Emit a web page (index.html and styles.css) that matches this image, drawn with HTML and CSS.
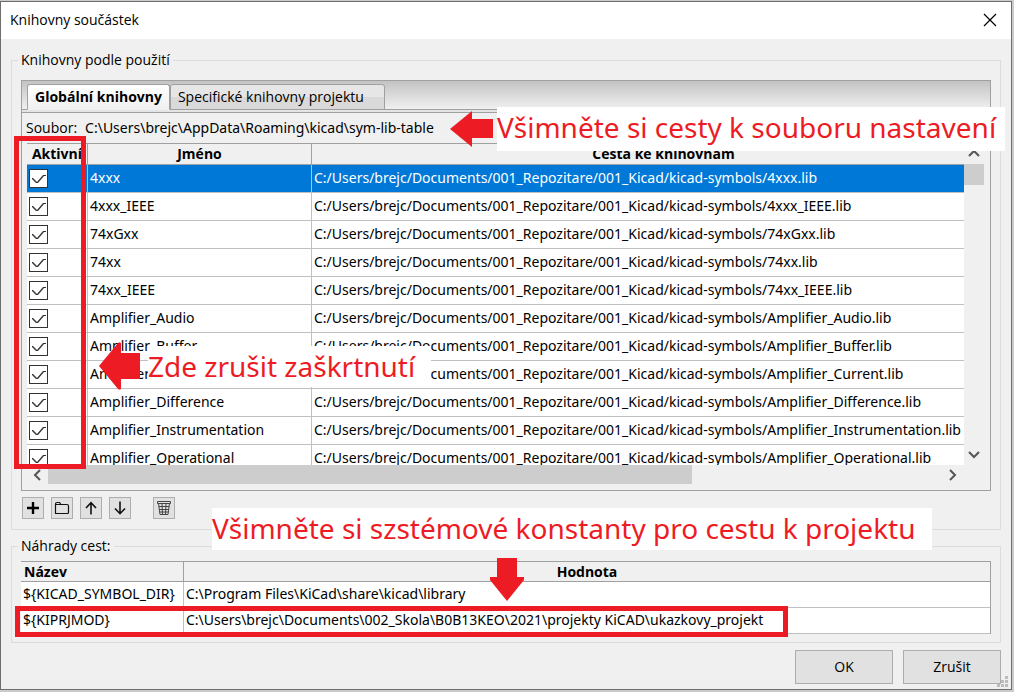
FILE: index.html
```html
<!DOCTYPE html>
<html lang="cs">
<head>
<meta charset="utf-8">
<title>Knihovny součástek</title>
<link rel="stylesheet" href="styles.css">
</head>
<body>
<main class="window">
  <header class="titlebar">
    <h1 class="title">Knihovny součástek</h1>
    <button class="close" aria-label="Zavřít"><svg width="14" height="14" viewBox="0 0 14 14"><path d="M1 1L13 13M13 1L1 13" fill="none" stroke="#000" stroke-width="1.2"/></svg></button>
  </header>

  <fieldset class="group">
    <legend>Knihovny podle použití</legend>
    <div class="notebook">
      <div class="tabs" role="tablist">
        <button class="tab tab-active" role="tab" aria-selected="true">Globální knihovny</button>
        <button class="tab" role="tab" aria-selected="false">Specifické knihovny projektu</button>
      </div>
      <div class="file"><span>Soubor:</span><span class="path">C:\Users\brejc\AppData\Roaming\kicad\sym-lib-table</span></div>
      <div class="grid">
        <div class="viewport">
          <table class="libs">
            <colgroup><col class="c-active"><col class="c-name"><col></colgroup>
            <thead><tr><th>Aktivní</th><th>Jméno</th><th>Cesta ke knihovnám</th></tr></thead>
            <tbody>
              <tr class="selected"><td><input type="checkbox" checked aria-label="4xxx"></td><td>4xxx</td><td>C:/Users/brejc/Documents/001_Repozitare/001_Kicad/kicad-symbols/4xxx.lib</td></tr>
              <tr><td><input type="checkbox" checked aria-label="4xxx_IEEE"></td><td>4xxx_IEEE</td><td>C:/Users/brejc/Documents/001_Repozitare/001_Kicad/kicad-symbols/4xxx_IEEE.lib</td></tr>
              <tr><td><input type="checkbox" checked aria-label="74xGxx"></td><td>74xGxx</td><td>C:/Users/brejc/Documents/001_Repozitare/001_Kicad/kicad-symbols/74xGxx.lib</td></tr>
              <tr><td><input type="checkbox" checked aria-label="74xx"></td><td>74xx</td><td>C:/Users/brejc/Documents/001_Repozitare/001_Kicad/kicad-symbols/74xx.lib</td></tr>
              <tr><td><input type="checkbox" checked aria-label="74xx_IEEE"></td><td>74xx_IEEE</td><td>C:/Users/brejc/Documents/001_Repozitare/001_Kicad/kicad-symbols/74xx_IEEE.lib</td></tr>
              <tr><td><input type="checkbox" checked aria-label="Amplifier_Audio"></td><td>Amplifier_Audio</td><td>C:/Users/brejc/Documents/001_Repozitare/001_Kicad/kicad-symbols/Amplifier_Audio.lib</td></tr>
              <tr><td><input type="checkbox" checked aria-label="Amplifier_Buffer"></td><td>Amplifier_Buffer</td><td>C:/Users/brejc/Documents/001_Repozitare/001_Kicad/kicad-symbols/Amplifier_Buffer.lib</td></tr>
              <tr><td><input type="checkbox" checked aria-label="Amplifier_Current"></td><td>Amplifier_Current</td><td>C:/Users/brejc/Documents/001_Repozitare/001_Kicad/kicad-symbols/Amplifier_Current.lib</td></tr>
              <tr><td><input type="checkbox" checked aria-label="Amplifier_Difference"></td><td>Amplifier_Difference</td><td>C:/Users/brejc/Documents/001_Repozitare/001_Kicad/kicad-symbols/Amplifier_Difference.lib</td></tr>
              <tr><td><input type="checkbox" checked aria-label="Amplifier_Instrumentation"></td><td>Amplifier_Instrumentation</td><td>C:/Users/brejc/Documents/001_Repozitare/001_Kicad/kicad-symbols/Amplifier_Instrumentation.lib</td></tr>
              <tr><td><input type="checkbox" checked aria-label="Amplifier_Operational"></td><td>Amplifier_Operational</td><td>C:/Users/brejc/Documents/001_Repozitare/001_Kicad/kicad-symbols/Amplifier_Operational.lib</td></tr>
            </tbody>
          </table>
        </div>
        <div class="vbar">
          <svg width="20" height="20" viewBox="0 0 20 20"><path d="M5 13L10 8L15 13" fill="none" stroke="#555" stroke-width="2"/></svg>
          <div class="vthumb"></div>
          <svg class="vdown" width="20" height="20" viewBox="0 0 20 20"><path d="M5 7L10 12L15 7" fill="none" stroke="#555" stroke-width="2"/></svg>
        </div>
        <div class="hbar">
          <svg width="21" height="20" viewBox="0 0 21 20"><path d="M13 5L8 10L13 15" fill="none" stroke="#555" stroke-width="2"/></svg>
          <div class="htrack"><div class="hthumb"></div></div>
          <svg width="21" height="20" viewBox="0 0 21 20"><path d="M7 5L12 10L7 15" fill="none" stroke="#555" stroke-width="2"/></svg>
        </div>
      </div>
    </div>
    <div class="tools">
      <button class="tool" aria-label="Přidat"><svg width="20" height="20" viewBox="0 0 20 20"><path d="M10 4V16M4 10H16" fill="none" stroke="#000" stroke-width="2.4"/></svg></button>
      <button class="tool" aria-label="Procházet"><svg width="20" height="20" viewBox="0 0 20 20"><path d="M3.500 15.500V6Q3.500 4.500 5 4.500H7.500L9 6.500H15Q16.500 6.500 16.500 8V14.500Q16.500 15.500 15.500 15.500ZM3.500 6.500H9" fill="none" stroke="#111" stroke-width="1.200"/></svg></button>
      <button class="tool" aria-label="Nahoru"><svg width="20" height="20" viewBox="0 0 20 20"><path d="M10 16.500V4.500M5 10L10 4.700L15 10" fill="none" stroke="#111" stroke-width="1.600"/></svg></button>
      <button class="tool" aria-label="Dolů"><svg width="20" height="20" viewBox="0 0 20 20"><path d="M10 3.500V15.500M5 10.500L10 15.700L15 10.500" fill="none" stroke="#111" stroke-width="1.600"/></svg></button>
      <button class="tool tool-delete" aria-label="Smazat"><svg width="20" height="20" viewBox="0 0 20 20"><path d="M3.500 3.500H16.500V5.500H3.500ZM4.500 5.500L6 16.500H14L15.500 5.500M8 5.500L8.500 16.500M12 5.500L11.500 16.500M5 8.500H15M5.300 11.500H14.700M5.700 14H14.300" fill="none" stroke="#444" stroke-width="1"/></svg></button>
    </div>
  </fieldset>

  <fieldset class="group group-paths">
    <legend>Náhrady cest:</legend>
    <table class="paths">
      <colgroup><col class="c-var"><col></colgroup>
      <thead><tr><th>Název</th><th>Hodnota</th></tr></thead>
      <tbody>
        <tr><td>${KICAD_SYMBOL_DIR}</td><td>C:\Program Files\KiCad\share\kicad\library</td></tr>
        <tr><td>${KIPRJMOD}</td><td>C:\Users\brejc\Documents\002_Skola\B0B13KEO\2021\projekty KiCAD\ukazkovy_projekt</td></tr>
      </tbody>
    </table>
  </fieldset>

  <footer class="actions">
    <button class="action">OK</button>
    <button class="action">Zrušit</button>
  </footer>
  <svg class="grip" width="12" height="12" viewBox="0 0 12 12"><path d="M8 0h3v3h-3zM4 4h3v3h-3zM8 4h3v3h-3zM0 8h3v3h-3zM4 8h3v3h-3zM8 8h3v3h-3z" fill="#bdbdbd"/></svg>
</main>

<div class="mark mark-active"></div>
<div class="mark mark-project"></div>
<p class="note note-file">Všimněte si cesty k souboru nastavení</p>
<p class="note note-uncheck">Zde zrušit zaškrtnutí</p>
<p class="note note-const">Všimněte si szstémové konstanty pro cestu k projektu</p>
<svg class="arrow arrow-file" width="43" height="36" viewBox="0 0 43 36"><path d="M0 18L22 0V8H43V27H22V36Z" fill="#ed1c24"/></svg>
<svg class="arrow arrow-uncheck" width="42" height="48" viewBox="0 0 42 48"><path d="M0 24L19 1Q22-1 22 2V11H41V37H22V46Q22 49 19 47Z" fill="#ed1c24"/></svg>
<svg class="arrow arrow-const" width="34" height="44" viewBox="0 0 34 44"><path d="M7 0H27V19H34V22L17 43L0 22V19H7Z" fill="#ed1c24"/></svg>
</body>
</html>
```
FILE: styles.css
```css
* { box-sizing: border-box; }

body {
  position: relative;
  margin: 0;
  padding: 1px 2px 2px 0;
  background: #cbcbcb;
  color: #000;
  font: 14px/20px "Open Sans", "Noto Sans", sans-serif;
}

button { font: inherit; color: inherit; }
svg { display: block; }

.window {
  position: relative;
  border: 1px solid #6e6e6e;
  background: #f0f0f0;
}

.titlebar {
  display: flex;
  align-items: center;
  justify-content: space-between;
  height: 37px;
  padding: 0 14px 1px 9px;
  background: #fff;
}
.title { margin: 0; font-size: 14px; font-weight: 400; }
.close { padding: 0; border: 0; background: none; }

.group {
  min-width: 0;
  margin: 11px 10px 0;
  padding: 10px 9px 9px;
  border: 1px solid #dcdcdc;
}
.group legend { margin-left: -3px; padding: 0 3px; }
.group-paths { margin-top: 6px; padding: 5px 9px 8px; }

.notebook { border: 1px solid #a0a0a0; }

.tabs {
  display: flex;
  height: 32px;
  padding: 3px 5px 0;
  border-bottom: 1px solid #a0a0a0;
  background:
    linear-gradient(transparent 28px, #a0a0a0 28px, #a0a0a0 29px, #e4e4e4 29px),
    linear-gradient(#c3c3c3, #f0f0f0 28px);
}
.tab {
  height: 26px;
  padding: 0 20px 0 7px;
  border: 1px solid #a0a0a0;
  border-radius: 3px 3px 0 0;
  background: linear-gradient(#e6e6e6 50%, #d9d9d9 50%);
  line-height: 24px;
  white-space: nowrap;
}
.tab-active {
  padding: 0 7px;
  border-bottom-color: #f0f0f0;
  background: linear-gradient(#fff, #f0f0f0);
  font-weight: 700;
}

.file { display: flex; gap: 8px; padding: 5px 4px; }
.path, td, .note { font-family: "Noto Sans", "Open Sans", sans-serif; }

.grid {
  display: grid;
  grid-template-columns: minmax(0, 1fr) 20px;
  padding: 0 6px 5px 5px;
}
.viewport { height: 322px; overflow: hidden; background: #fff; }

table { table-layout: fixed; border-collapse: separate; border-spacing: 0; background: #fff; }
th {
  height: 22px;
  padding: 0;
  border: solid #a0a0a0;
  border-width: 1px 1px 1px 0;
  background: #f0f0f0;
  font-weight: 700;
}
td {
  padding: 0 2px 1px;
  border: solid #c0c0c0;
  border-width: 0 1px 1px 0;
  white-space: nowrap;
}
.libs { width: 989px; }
.libs td { height: 28px; }
.libs td:first-child { padding-bottom: 0; }
.c-active { width: 61px; }
.c-name { width: 224px; }
.selected td { background: #0078d7; color: #fff; }

input[type="checkbox"] {
  appearance: none;
  display: block;
  width: 19px;
  height: 19px;
  margin: 0;
  border: 1px solid #333;
  background: #fff;
}
input[type="checkbox"]:checked::before {
  content: "";
  display: block;
  width: 17px;
  height: 17px;
  background: #333;
  clip-path: polygon(2px 8px, 3px 8px, 7px 12px, 13px 5px, 16px 5px, 16px 6px, 14px 6px, 8px 13px, 6px 13px, 2px 9px);
}

.vbar { display: flex; flex-direction: column; }
.vthumb { height: 21px; margin-top: 1px; background: #cdcdcd; }
.vdown { margin-top: auto; }
.hbar { display: flex; height: 20px; }
.htrack { flex: 1; }
.hthumb { width: 72%; height: 19px; background: #cdcdcd; }

.tools { display: flex; gap: 7px; margin-top: 6px; padding: 0 0 1px 1px; }
.tool {
  width: 22px;
  height: 22px;
  padding: 0;
  border: 1px solid #adadad;
  background: #e1e1e1;
}
.tool-delete { margin-left: 15px; }

.paths { width: 100%; border-right: 1px solid #a0a0a0; }
.paths th { height: 21px; line-height: 19px; }
.paths th:first-child { padding-left: 3px; text-align: left; }
.paths th:last-child, .paths td:last-child { border-right: 0; }
.paths td { height: 26px; }
.c-var { width: 163px; }

.actions { display: flex; justify-content: flex-end; gap: 10px; padding: 7px 10px 5px; }
.action { width: 98px; height: 34px; border: 1px solid #adadad; background: #e1e1e1; }
.grip { position: absolute; right: 2px; bottom: 1px; }

.mark, .note, .arrow { position: absolute; }
.mark { border: 5px solid #ed1c24; }
.mark-active { left: 14px; top: 136px; width: 72px; height: 333px; }
.mark-project { left: 15px; top: 606px; width: 773px; height: 31px; }
.note {
  margin: 0;
  background: #fff;
  color: #ed1c24;
  font-size: 28px;
  line-height: 40px;
  white-space: nowrap;
}
.note-file { left: 497px; top: 107px; width: 508px; height: 44px; }
.note-uncheck { left: 148px; top: 346px; width: 283px; height: 41px; }
.note-const { left: 212px; top: 508px; width: 720px; height: 42px; }
.arrow-file { left: 450px; top: 111px; }
.arrow-uncheck { left: 99px; top: 342px; }
.arrow-const { left: 490px; top: 558px; }
```
